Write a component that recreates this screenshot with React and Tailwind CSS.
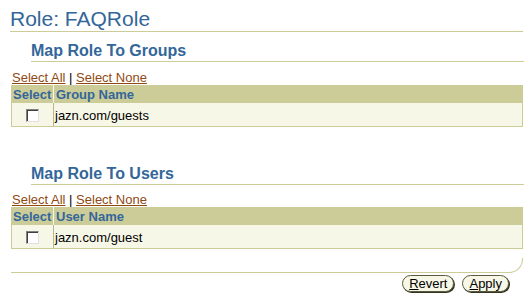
import React from "react";

const Checkbox = () => (
    <span className="block w-[13px] h-[13px] bg-white border border-t-[#808080] border-l-[#808080] border-r-[#e0e0e0] border-b-[#e0e0e0] shadow-[inset_1px_1px_0_#404040]" />
);

const SelectLinks = ({ className }) => (
    <div className={`ml-[12px] text-[13px] leading-[15px] text-black ${className}`}>
        <span className="text-[#8f4a14] underline cursor-pointer">Select All</span>
        {" | "}
        <span className="text-[#8f4a14] underline cursor-pointer">Select None</span>
    </div>
);

const SubHeader = ({ title, className }) => (
    <div className={`ml-[31px] w-[493px] h-[30px] pt-[10px] border-b border-[#cccc99] ${className}`}>
        <h2 className="text-[16px] leading-[18px] font-bold text-[#336699]">{title}</h2>
    </div>
);

const MapTable = ({ column, name }) => (
    <div className="ml-[11px] w-[512px] text-[13px]">
        <div className="flex h-[18px] bg-[#cccc99] leading-[15px] font-bold text-[#336699]">
            <div className="w-[42px] pl-[2px] flex items-center">Select</div>
            <div className="flex-1 border-l border-[#f7f7e7] pl-[2px] flex items-center">{column}</div>
        </div>
        <div className="flex h-[24px] bg-[#f7f7e7] border-b border-l border-r border-[#cccc99] leading-[15px]">
            <div className="w-[41px] flex items-center justify-center pt-[1px]">
                <Checkbox />
            </div>
            <div className="flex-1 border-l border-[#b8b890] pl-[1px] pt-[2px] flex items-center text-black">{name}</div>
        </div>
    </div>
);

const Button = ({ accessKey, rest }) => (
    <button className="h-[17px] px-[6px] rounded-full border border-[#5a5a3c] bg-[#f7f7e7] shadow-[1px_1px_0_#333322] text-[13px] leading-[15px] text-black">
        <span className="underline">{accessKey}</span>{rest}
    </button>
);

export default function App() {
    return (
        <div className="w-[532px] h-[303px] bg-white overflow-hidden font-['Liberation_Sans',Arial,sans-serif]">
            <div className="ml-[10px] w-[513px] h-[32px] pt-[7px] border-b border-[#cccc99]">
                <h1 className="text-[21px] leading-[24px] text-[#336699]">Role: FAQRole</h1>
            </div>

            <SubHeader title="Map Role To Groups" />
            <SelectLinks className="mt-[8px]" />
            <MapTable column="Group Name" name="jazn.com/guests" />

            <SubHeader title="Map Role To Users" className="mt-[28px]" />
            <SelectLinks className="mt-[7px]" />
            <MapTable column="User Name" name="jazn.com/guest" />

            <div className="mt-[9px] ml-[11px] w-[512px] h-[15px] border-b border-r border-[#cccc99] rounded-br-[14px]" />

            <div className="mt-[2px] flex justify-end gap-[8px] pr-[23px]">
                <Button accessKey="R" rest="evert" />
                <Button accessKey="A" rest="pply" />
            </div>
        </div>
    );
}
